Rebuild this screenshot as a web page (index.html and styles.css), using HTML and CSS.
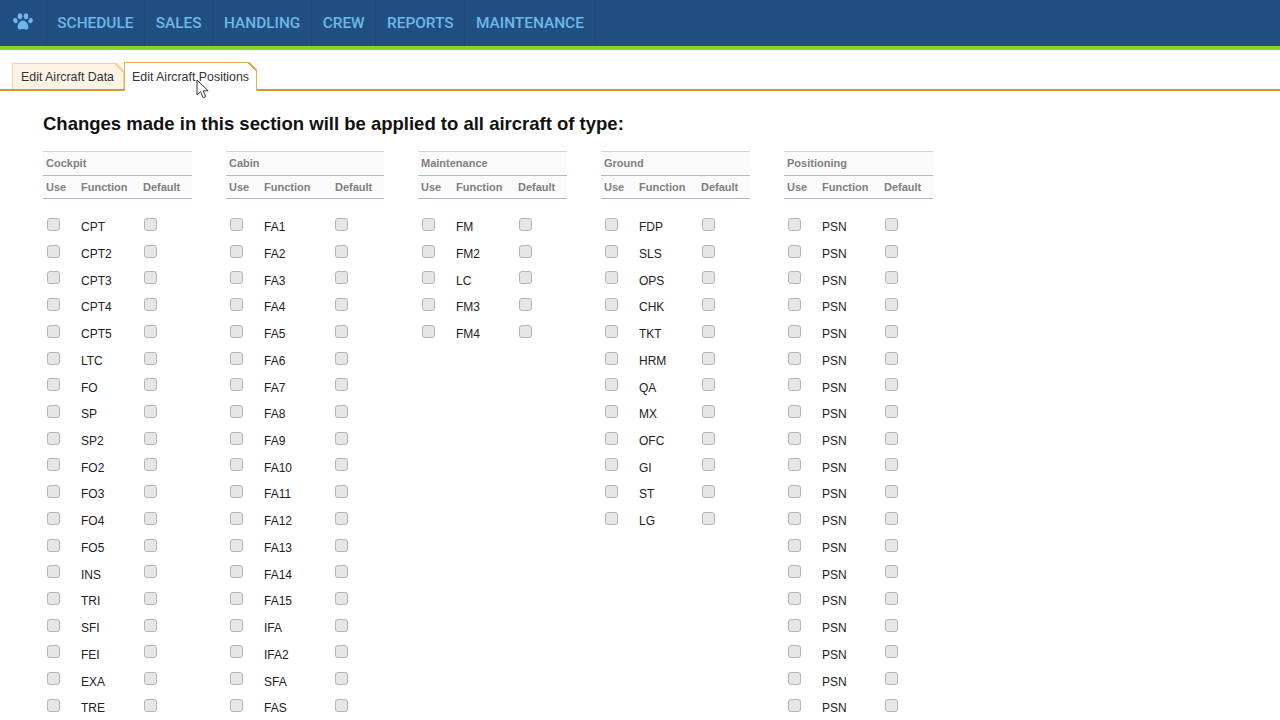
FILE: index.html
```html
<!DOCTYPE html>
<html lang="en">
<head>
  <meta charset="UTF-8">
  <meta name="viewport" content="width=device-width, initial-scale=1.0">
  <title>Edit Aircraft Positions</title>
  <link rel="stylesheet" href="styles.css">
</head>
<body>

  <nav class="topnav">
    <a class="logo" href="#">
      <svg width="20" height="18" viewBox="0 0 20 18" fill="#6cb8e8">
        <ellipse cx="2.4" cy="7.6" rx="2.1" ry="2.7" transform="rotate(-18 2.4 7.6)"/>
        <ellipse cx="7" cy="3.2" rx="2.3" ry="3"/>
        <ellipse cx="13" cy="3.2" rx="2.3" ry="3"/>
        <ellipse cx="17.6" cy="7.6" rx="2.1" ry="2.7" transform="rotate(18 17.6 7.6)"/>
        <path d="M10 7.5c-2.6 0-5.4 3.4-5.4 6.4 0 2 1.500 2.900 3 2.500 1.600-.4 3.200-.4 4.800 0 1.500.4 3-.5 3-2.500 0-3-2.800-6.400-5.400-6.400z"/>
      </svg>
    </a>
    <a class="navitem" href="#">SCHEDULE</a>
    <a class="navitem" href="#">SALES</a>
    <a class="navitem" href="#">HANDLING</a>
    <a class="navitem" href="#">CREW</a>
    <a class="navitem" href="#">REPORTS</a>
    <a class="navitem" href="#">MAINTENANCE</a>
  </nav>

  <div class="tabs">
    <a class="tab" href="#">Edit Aircraft Data</a>
    <a class="tab active" href="#">Edit Aircraft Positions</a>
  </div>

  <svg class="cursor" width="14" height="20" viewBox="0 0 14 20">
    <path d="M1 1v15l3.600-3.300 2.500 6 2.600-1.100-2.500-5.800h5z" fill="#fff" stroke="#333" stroke-width="1"/>
  </svg>

  <main class="content">
    <h2 class="notice">Changes made in this section will be applied to all aircraft of type:</h2>

    <div class="groups">

      <section class="group">
        <div class="group-title">Cockpit</div>
        <div class="row head"><span>Use</span><span>Function</span><span>Default</span></div>
        <div class="rows">
          <div class="row"><input type="checkbox"><span>CPT</span><input type="checkbox"></div>
          <div class="row"><input type="checkbox"><span>CPT2</span><input type="checkbox"></div>
          <div class="row"><input type="checkbox"><span>CPT3</span><input type="checkbox"></div>
          <div class="row"><input type="checkbox"><span>CPT4</span><input type="checkbox"></div>
          <div class="row"><input type="checkbox"><span>CPT5</span><input type="checkbox"></div>
          <div class="row"><input type="checkbox"><span>LTC</span><input type="checkbox"></div>
          <div class="row"><input type="checkbox"><span>FO</span><input type="checkbox"></div>
          <div class="row"><input type="checkbox"><span>SP</span><input type="checkbox"></div>
          <div class="row"><input type="checkbox"><span>SP2</span><input type="checkbox"></div>
          <div class="row"><input type="checkbox"><span>FO2</span><input type="checkbox"></div>
          <div class="row"><input type="checkbox"><span>FO3</span><input type="checkbox"></div>
          <div class="row"><input type="checkbox"><span>FO4</span><input type="checkbox"></div>
          <div class="row"><input type="checkbox"><span>FO5</span><input type="checkbox"></div>
          <div class="row"><input type="checkbox"><span>INS</span><input type="checkbox"></div>
          <div class="row"><input type="checkbox"><span>TRI</span><input type="checkbox"></div>
          <div class="row"><input type="checkbox"><span>SFI</span><input type="checkbox"></div>
          <div class="row"><input type="checkbox"><span>FEI</span><input type="checkbox"></div>
          <div class="row"><input type="checkbox"><span>EXA</span><input type="checkbox"></div>
          <div class="row"><input type="checkbox"><span>TRE</span><input type="checkbox"></div>
        </div>
      </section>

      <section class="group wide">
        <div class="group-title">Cabin</div>
        <div class="row head"><span>Use</span><span>Function</span><span>Default</span></div>
        <div class="rows">
          <div class="row"><input type="checkbox"><span>FA1</span><input type="checkbox"></div>
          <div class="row"><input type="checkbox"><span>FA2</span><input type="checkbox"></div>
          <div class="row"><input type="checkbox"><span>FA3</span><input type="checkbox"></div>
          <div class="row"><input type="checkbox"><span>FA4</span><input type="checkbox"></div>
          <div class="row"><input type="checkbox"><span>FA5</span><input type="checkbox"></div>
          <div class="row"><input type="checkbox"><span>FA6</span><input type="checkbox"></div>
          <div class="row"><input type="checkbox"><span>FA7</span><input type="checkbox"></div>
          <div class="row"><input type="checkbox"><span>FA8</span><input type="checkbox"></div>
          <div class="row"><input type="checkbox"><span>FA9</span><input type="checkbox"></div>
          <div class="row"><input type="checkbox"><span>FA10</span><input type="checkbox"></div>
          <div class="row"><input type="checkbox"><span>FA11</span><input type="checkbox"></div>
          <div class="row"><input type="checkbox"><span>FA12</span><input type="checkbox"></div>
          <div class="row"><input type="checkbox"><span>FA13</span><input type="checkbox"></div>
          <div class="row"><input type="checkbox"><span>FA14</span><input type="checkbox"></div>
          <div class="row"><input type="checkbox"><span>FA15</span><input type="checkbox"></div>
          <div class="row"><input type="checkbox"><span>IFA</span><input type="checkbox"></div>
          <div class="row"><input type="checkbox"><span>IFA2</span><input type="checkbox"></div>
          <div class="row"><input type="checkbox"><span>SFA</span><input type="checkbox"></div>
          <div class="row"><input type="checkbox"><span>FAS</span><input type="checkbox"></div>
        </div>
      </section>

      <section class="group">
        <div class="group-title">Maintenance</div>
        <div class="row head"><span>Use</span><span>Function</span><span>Default</span></div>
        <div class="rows">
          <div class="row"><input type="checkbox"><span>FM</span><input type="checkbox"></div>
          <div class="row"><input type="checkbox"><span>FM2</span><input type="checkbox"></div>
          <div class="row"><input type="checkbox"><span>LC</span><input type="checkbox"></div>
          <div class="row"><input type="checkbox"><span>FM3</span><input type="checkbox"></div>
          <div class="row"><input type="checkbox"><span>FM4</span><input type="checkbox"></div>
        </div>
      </section>

      <section class="group">
        <div class="group-title">Ground</div>
        <div class="row head"><span>Use</span><span>Function</span><span>Default</span></div>
        <div class="rows">
          <div class="row"><input type="checkbox"><span>FDP</span><input type="checkbox"></div>
          <div class="row"><input type="checkbox"><span>SLS</span><input type="checkbox"></div>
          <div class="row"><input type="checkbox"><span>OPS</span><input type="checkbox"></div>
          <div class="row"><input type="checkbox"><span>CHK</span><input type="checkbox"></div>
          <div class="row"><input type="checkbox"><span>TKT</span><input type="checkbox"></div>
          <div class="row"><input type="checkbox"><span>HRM</span><input type="checkbox"></div>
          <div class="row"><input type="checkbox"><span>QA</span><input type="checkbox"></div>
          <div class="row"><input type="checkbox"><span>MX</span><input type="checkbox"></div>
          <div class="row"><input type="checkbox"><span>OFC</span><input type="checkbox"></div>
          <div class="row"><input type="checkbox"><span>GI</span><input type="checkbox"></div>
          <div class="row"><input type="checkbox"><span>ST</span><input type="checkbox"></div>
          <div class="row"><input type="checkbox"><span>LG</span><input type="checkbox"></div>
        </div>
      </section>

      <section class="group">
        <div class="group-title">Positioning</div>
        <div class="row head"><span>Use</span><span>Function</span><span>Default</span></div>
        <div class="rows">
          <div class="row"><input type="checkbox"><span>PSN</span><input type="checkbox"></div>
          <div class="row"><input type="checkbox"><span>PSN</span><input type="checkbox"></div>
          <div class="row"><input type="checkbox"><span>PSN</span><input type="checkbox"></div>
          <div class="row"><input type="checkbox"><span>PSN</span><input type="checkbox"></div>
          <div class="row"><input type="checkbox"><span>PSN</span><input type="checkbox"></div>
          <div class="row"><input type="checkbox"><span>PSN</span><input type="checkbox"></div>
          <div class="row"><input type="checkbox"><span>PSN</span><input type="checkbox"></div>
          <div class="row"><input type="checkbox"><span>PSN</span><input type="checkbox"></div>
          <div class="row"><input type="checkbox"><span>PSN</span><input type="checkbox"></div>
          <div class="row"><input type="checkbox"><span>PSN</span><input type="checkbox"></div>
          <div class="row"><input type="checkbox"><span>PSN</span><input type="checkbox"></div>
          <div class="row"><input type="checkbox"><span>PSN</span><input type="checkbox"></div>
          <div class="row"><input type="checkbox"><span>PSN</span><input type="checkbox"></div>
          <div class="row"><input type="checkbox"><span>PSN</span><input type="checkbox"></div>
          <div class="row"><input type="checkbox"><span>PSN</span><input type="checkbox"></div>
          <div class="row"><input type="checkbox"><span>PSN</span><input type="checkbox"></div>
          <div class="row"><input type="checkbox"><span>PSN</span><input type="checkbox"></div>
          <div class="row"><input type="checkbox"><span>PSN</span><input type="checkbox"></div>
          <div class="row"><input type="checkbox"><span>PSN</span><input type="checkbox"></div>
        </div>
      </section>

    </div>
  </main>

</body>
</html>
```

FILE: styles.css
```css
html, body {
  height: 100%;
  overflow: hidden;
}
body {
  margin: 0;
  position: relative;
  background: #fff;
  font-family: 'Liberation Sans', Arial, sans-serif;
  color: #222;
}
a {
  text-decoration: none;
  color: inherit;
}

/* top bar */
.topnav {
  display: flex;
  height: 46px;
  background: #224f82;
  border-bottom: 4px solid #8ed321;
}
.logo {
  width: 45.6px;
  display: flex;
  align-items: center;
  justify-content: center;
  padding-bottom: 2px;
  box-sizing: border-box;
}
.navitem {
  display: flex;
  align-items: center;
  padding: 0 10.7px;
  border-left: 1px solid #1f4877;
  font-family: Roboto, sans-serif;
  font-weight: 500;
  font-size: 15.4px;
  color: #6cb8e8;
}
.navitem:last-child {
  border-right: 1px solid #1f4877;
}

/* tabs */
.tabs {
  display: flex;
  align-items: flex-end;
  height: 38px;
  margin-top: 1px;
  padding-left: 12px;
  border-bottom: 2px solid #dd9232;
}
.tab {
  position: relative;
  width: 112px;
  box-sizing: border-box;
  height: 26px;
  padding: 0 8px;
  line-height: 26px;
  font-size: 12.4px;
  white-space: nowrap;
  color: #333;
  background: #fdf4e6;
  border: 1px solid #f3d48c;
  border-bottom: 0;
}
.tab::after {
  content: "";
  position: absolute;
  top: -1px;
  right: -1px;
  width: 9px;
  height: 9px;
  background: linear-gradient(to top right, transparent 44%, #f3d48c 44%, #f3d48c 56%, #fff 56%);
}
.tab.active {
  width: 133px;
  height: 29px;
  margin-bottom: -2px;
  padding: 0 7px;
  background: #fff;
  border-color: #e6a94f;
  line-height: 29px;
}
.tab.active::after {
  background: linear-gradient(to top right, transparent 44%, #e6a94f 44%, #e6a94f 56%, #fff 56%);
}
.cursor {
  position: absolute;
  left: 196px;
  top: 79px;
}

/* positions */
.content {
  padding: 21px 0 0 43px;
}
.notice {
  margin: 0 0 15px;
  font-size: 18.5px;
  line-height: 24px;
  font-weight: bold;
  color: #111;
}
.groups {
  display: flex;
  align-items: flex-start;
  gap: 34px;
}
.group {
  width: 149px;
}
.group.wide {
  width: 158px;
}
.group-title {
  height: 23px;
  padding-left: 3px;
  border-top: 1px solid #cfd3da;
  border-bottom: 1px solid #aab8d6;
  background: #fbfbfb;
  font-size: 11px;
  font-weight: bold;
  line-height: 22px;
  color: #808080;
}
.row {
  display: grid;
  grid-template-columns: 38px 63px 1fr;
}
.wide .row {
  grid-template-columns: 38px 71px 1fr;
}
.row.head {
  grid-template-columns: 38px 62px 1fr;
  height: 22px;
  border-bottom: 1px solid #aab8d6;
  background: #fbfbfb;
  font-size: 11px;
  font-weight: bold;
  line-height: 23px;
  color: #808080;
}
.wide .row.head {
  grid-template-columns: 38px 71px 1fr;
}
.row.head span:first-child {
  padding-left: 3px;
}
.rows {
  padding-top: 15.3px;
}
.rows .row {
  height: 26.72px;
  font-size: 12px;
  line-height: 27px;
  color: #222;
}
.rows input {
  appearance: none;
  width: 13px;
  height: 13px;
  margin: 3.7px 0 0 4px;
  border: 1px solid #b5b5b5;
  border-radius: 3px;
  background: #e6e6e6;
}
.rows input:last-child {
  margin-left: 0;
}
```
